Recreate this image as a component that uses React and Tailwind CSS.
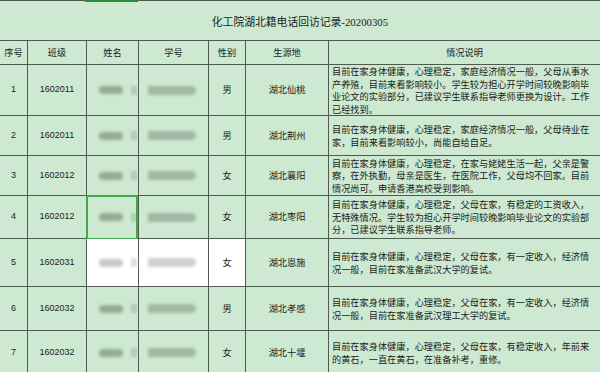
import React from "react";

const rows = [
  { no: 1, cls: "1602011", sex: "男", place: "湖北仙桃", h: "h-[51px]", lines: [
    "目前在家身体健康，心理稳定，家庭经济情况一般，父母从事水",
    "产养殖，目前来看影响较小。学生较为担心开学时间较晚影响毕",
    "业论文的实验部分，已建议学生联系指导老师更换为设计。工作",
    "已经找到。"] },
  { no: 2, cls: "1602011", sex: "男", place: "湖北荆州", h: "h-[40px]", lines: [
    "目前在家身体健康，心理稳定，家庭经济情况一般，父母待业在",
    "家，目前来看影响较小，尚能自给自足。"] },
  { no: 3, cls: "1602012", sex: "女", place: "湖北襄阳", h: "h-[40px]", lines: [
    "目前在家身体健康，心理稳定，在家与姥姥生活一起，父亲是警",
    "察，在外执勤，母亲是医生，在医院工作，父母均不回家。目前",
    "情况尚可。申请香港高校受到影响。"] },
  { no: 4, cls: "1602012", sex: "女", place: "湖北枣阳", h: "h-[43px]", selected: true, lines: [
    "目前在家身体健康，心理稳定，父母在家，有稳定的工资收入，",
    "无特殊情况。学生较为担心开学时间较晚影响毕业论文的实验部",
    "分，已建议学生联系指导老师。"] },
  { no: 5, cls: "1602031", sex: "女", place: "湖北恩施", h: "h-[48px]", white: true, lines: [
    "目前在家身体健康，心理稳定，父母在家，有一定收入，经济情",
    "况一般，目前在家准备武汉大学的复试。"] },
  { no: 6, cls: "1602032", sex: "男", place: "湖北孝感", h: "h-[44px]", lines: [
    "目前在家身体健康，心理稳定，父母在家，有一定收入，经济情",
    "况一般，目前在家准备武汉理工大学的复试。"] },
  { no: 7, cls: "1602032", sex: "女", place: "湖北十堰", h: "h-[44px]", lines: [
    "目前在家身体健康，心理稳定，父母在家，有稳定收入，年前来",
    "的黄石，一直在黄石，在准备补考，重修。"] },
];

const cell = "border-r border-[#505a50] flex items-center justify-center shrink-0";

function Row({ r }) {
  const blobA = r.white ? "bg-[#c9c9c9]" : "bg-[#93ab97]";
  const blobB = r.white ? "bg-[#e2e2e2]" : "bg-[#b4cdb8]";
  const blobC = r.white ? "bg-[#d2d2d2]" : "bg-[#a0b8a4]";
  const wbg = r.white ? "bg-white" : "";
  return (
    <div className={`flex border-b border-[#505a50] ${r.h}`}>
      <div className={`${cell} w-[28px] text-[9px] font-['Liberation_Sans',sans-serif]`}>{r.no}</div>
      <div className={`${cell} w-[59px] text-[9px] font-['Liberation_Sans',sans-serif]`}>{r.cls}</div>
      <div className={`${cell} w-[52px] relative !justify-start pl-[12px] pr-[1px] ${wbg}`}>
        <div className={`w-[24px] h-[8px] rounded-sm blur-[1.5px] ${blobA}`} />
        <div className={`ml-auto w-[6px] h-[9px] blur-[1px] ${blobB}`} />
        {r.selected && <div className="absolute -left-[1px] -top-[1px] -right-[0px] -bottom-[2px] border-2 border-[#43a84c]" />}
      </div>
      <div className={`${cell} w-[70px] !justify-start pl-[9px] ${wbg}`}>
        <div className={`w-[48px] h-[9px] rounded-r-full blur-[1.5px] ${blobC}`} />
      </div>
      <div className={`${cell} w-[37px] text-[9.2px] ${wbg}`}>{r.sex}</div>
      <div className={`${cell} w-[83px] text-[9.2px]`}>{r.place}</div>
      <div className="flex-1 flex flex-col justify-center pl-[3px] text-[9.2px] leading-[12.5px] whitespace-nowrap overflow-hidden">
        {r.lines.map((l, i) => (
          <div key={i}>{l}</div>
        ))}
      </div>
    </div>
  );
}

export default function App() {
  return (
    <div className="relative w-[600px] h-[372px] overflow-hidden bg-[#cde9d1] text-[#1c1c1c] font-['Noto_Sans_CJK_SC',sans-serif]">
      <div className="h-[41px] border-t border-b border-[#505a50] flex items-center justify-center pt-[4px] text-[10.8px] font-['Liberation_Serif','Noto_Sans_CJK_SC',serif]">
        化工院湖北籍电话回访记录-20200305
      </div>
      <div className="flex h-[24px] border-b border-[#505a50] text-[9.2px]">
        <div className={`${cell} w-[28px]`}>序号</div>
        <div className={`${cell} w-[59px]`}>班级</div>
        <div className={`${cell} w-[52px]`}>姓名</div>
        <div className={`${cell} w-[70px]`}>学号</div>
        <div className={`${cell} w-[37px]`}>性别</div>
        <div className={`${cell} w-[83px]`}>生源地</div>
        <div className="flex-1 flex items-center justify-center">情况说明</div>
      </div>
      {rows.map((r) => (
        <Row key={r.no} r={r} />
      ))}
      <div className="absolute top-0 left-[85px] w-[53px] h-[2px] bg-[#2f8a3a]" />
    </div>
  );
}
